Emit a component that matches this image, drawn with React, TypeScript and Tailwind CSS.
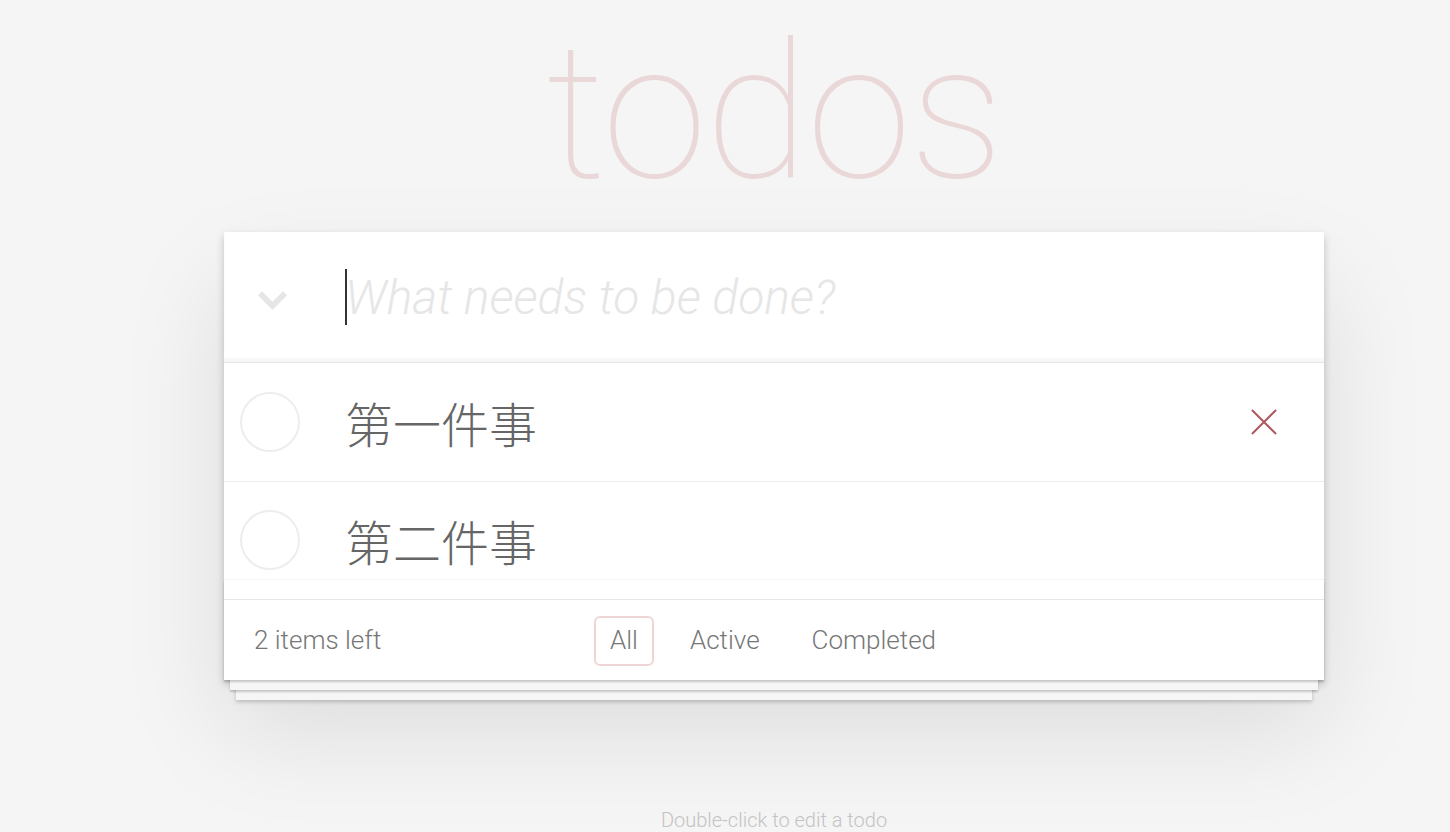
import React from 'react';

const todos = [
    { id: 1, title: '第一件事', hover: true },
    { id: 2, title: '第二件事', hover: false },
];

const ChevronIcon: React.FC<{ className?: string }> = ({ className }) => (
    <svg viewBox="0 0 32 22" className={className} fill="none">
        <path d="M3 3 L16 16 L29 3" stroke="#e6e6e6" strokeWidth="6" />
    </svg>
);

const CrossIcon: React.FC<{ className?: string }> = ({ className }) => (
    <svg viewBox="0 0 28 28" className={className} fill="none">
        <path d="M1 1 L27 27 M27 1 L1 27" stroke="#af5b5e" strokeWidth="2.2" />
    </svg>
);

const App: React.FC = () => {
    return (
        <div className="min-h-[832px] w-full bg-[#f5f5f5] font-['Roboto','Liberation_Sans','Noto_Sans_CJK_SC',sans-serif] text-[#4d4d4d] flex flex-col items-center pl-[98px] overflow-hidden">
            <header className="h-[232px] w-full flex justify-center items-start">
                <h1 className="text-[190px] leading-none font-thin tracking-[-2px] text-[rgba(175,47,47,0.15)] mt-[17px] select-none">todos</h1>
            </header>

            <section className="w-[1100px] bg-white relative z-0 shadow-[0_4px_8px_rgba(0,0,0,0.2),0_50px_100px_rgba(0,0,0,0.1)]">
                <div className="h-[130px] flex items-center shadow-[inset_0_-4px_2px_rgba(0,0,0,0.03)] relative z-10">
                    <div className="w-[121px] flex justify-start pl-[33px]">
                        <ChevronIcon className="w-[31px] h-[22px] mt-[8px]" />
                    </div>
                    <div className="flex items-center">
                        <span className="w-[2px] h-[56px] bg-[#333]" />
                        <span className="text-[48px] italic font-light text-[#e6e6e6] leading-none -ml-[2px] mt-[2px]">What needs to be done?</span>
                    </div>
                </div>

                <ul className="border-t border-[#e6e6e6]">
                    {todos.map((t, i) => (
                        <li
                            key={t.id}
                            className={`flex items-center ${i === 0 ? 'h-[119px] border-b border-[#ededed]' : 'h-[98px] border-b border-[#f6f6f6]'}`}
                        >
                            <div className="w-[121px] flex justify-start pl-[16px]">
                                <span className={`w-[60px] h-[60px] rounded-full border-2 border-[#ededed] ${i === 1 ? 'mt-[18px]' : ''}`} />
                            </div>
                            <span className={`flex-1 text-[48px] leading-none font-light text-[#666] font-['Noto_Sans_CJK_SC',sans-serif] ${i === 1 ? 'mt-[18px]' : ''}`}>
                                {t.title}
                            </span>
                            {t.hover && (
                                <button className="w-[28px] h-[28px] mr-[46px] flex items-center justify-center">
                                    <CrossIcon className="w-[26px] h-[26px]" />
                                </button>
                            )}
                        </li>
                    ))}
                </ul>

                <div className="h-[19px]" />

                <footer className="relative h-[81px] border-t border-[#e6e6e6] flex items-center px-[30px] text-[26px] font-light text-[#777]">
                    <div className="absolute left-0 right-0 bottom-0 h-[100px] -z-10 shadow-[0_2px_2px_rgba(0,0,0,0.2),0_16px_0_-6px_#f6f6f6,0_18px_2px_-6px_rgba(0,0,0,0.2),0_32px_0_-12px_#f6f6f6,0_34px_4px_-12px_rgba(0,0,0,0.2)]" />
                    <span className="w-[340px] mt-[1px]">2 items left</span>
                    <nav className="flex items-center gap-[20px] mt-[1px]">
                        <a className="px-[14px] h-[50px] flex items-center border-2 border-[rgba(175,47,47,0.2)] rounded-[6px]">All</a>
                        <a className="px-[14px] h-[50px] flex items-center border-2 border-transparent">Active</a>
                        <a className="px-[14px] h-[50px] flex items-center border-2 border-transparent">Completed</a>
                    </nav>
                </footer>
            </section>

            <p className="mt-[130px] text-[20px] font-light leading-none text-[#c4c4c4]">Double-click to edit a todo</p>
        </div>
    );
};

export default App;
